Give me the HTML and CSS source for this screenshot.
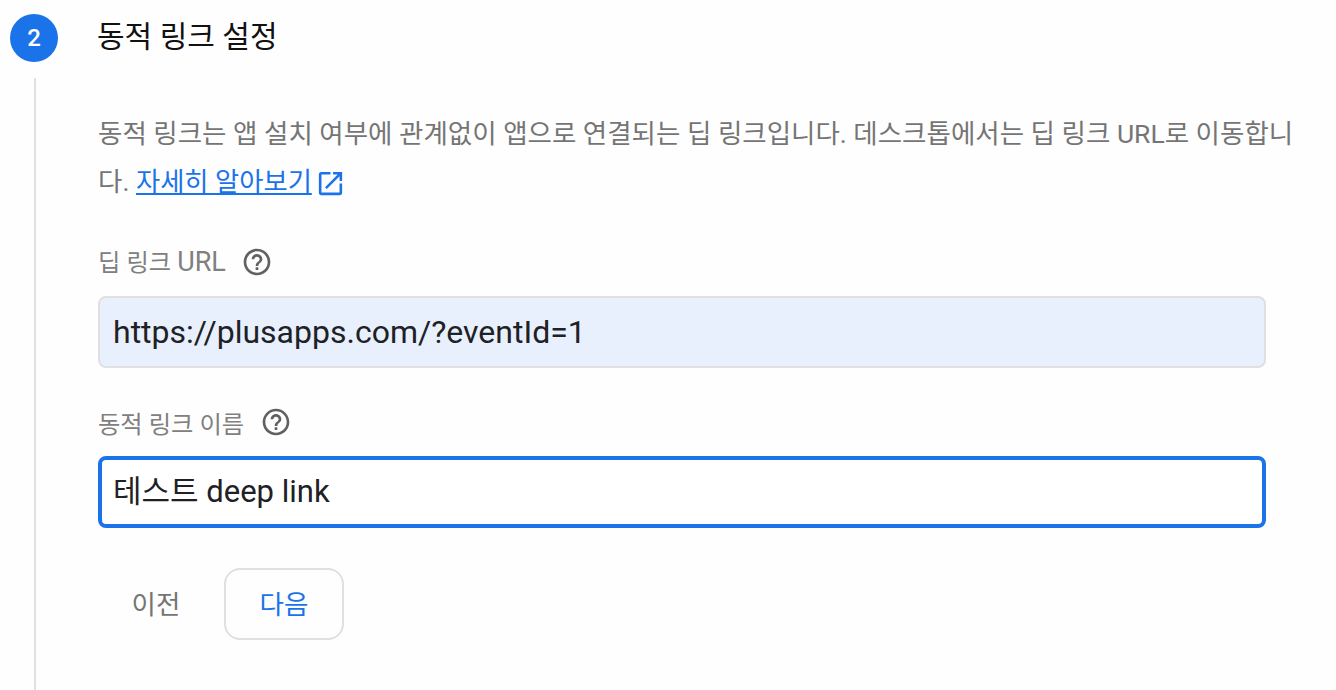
FILE: index.html
```html
<!DOCTYPE html>
<html lang="ko">
<head>
    <meta charset="UTF-8">
    <title>동적 링크 설정</title>
    <link rel="stylesheet" href="styles.css">
</head>
<body>
    <div class="step-header">
        <div class="step-num">2</div>
        <h2 class="step-title">동적 링크 설정</h2>
    </div>
    <div class="step-body">
        <p class="desc">동적 링크는 앱 설치 여부에 관계없이 앱으로 연결되는 딥 링크입니다. 데스크톱에서는 딥 링크 URL로 이동합니다. <a href="#" class="learn">자세히 알아보기</a><svg class="ext" viewBox="0 0 24 24" width="31" height="31"><path d="M19 19H5V5h7V3H5a2 2 0 0 0-2 2v14a2 2 0 0 0 2 2h14a2 2 0 0 0 2-2v-7h-2v7zM14 3v2h3.59l-9.83 9.83 1.41 1.41L19 6.41V10h2V3h-7z"/></svg></p>

        <div class="field-label first">
            <span class="label-text">딥 링크 <span class="latin">URL</span></span>
            <svg class="help" viewBox="0 0 24 24" width="32" height="32"><path d="M11 18h2v-2h-2v2zm1-16C6.48 2 2 6.48 2 12s4.48 10 10 10 10-4.48 10-10S17.52 2 12 2zm0 18c-4.41 0-8-3.59-8-8s3.59-8 8-8 8 3.59 8 8-3.59 8-8 8zm0-14c-2.21 0-4 1.79-4 4h2c0-1.1.9-2 2-2s2 .9 2 2c0 2-3 1.75-3 5h2c0-2.25 3-2.5 3-5 0-2.21-1.79-4-4-4z"/></svg>
        </div>
        <input class="field filled" type="text" value="https://plusapps.com/?eventId=1">

        <div class="field-label second">
            <span>동적 링크 이름</span>
            <svg class="help" viewBox="0 0 24 24" width="32" height="32"><path d="M11 18h2v-2h-2v2zm1-16C6.48 2 2 6.48 2 12s4.48 10 10 10 10-4.48 10-10S17.52 2 12 2zm0 18c-4.41 0-8-3.59-8-8s3.59-8 8-8 8 3.59 8 8-3.59 8-8 8zm0-14c-2.21 0-4 1.79-4 4h2c0-1.1.9-2 2-2s2 .9 2 2c0 2-3 1.75-3 5h2c0-2.25 3-2.5 3-5 0-2.21-1.79-4-4-4z"/></svg>
        </div>
        <input class="field focused" type="text" value="테스트 deep link">

        <div class="actions">
            <button class="btn-text">이전</button>
            <button class="btn-next">다음</button>
        </div>
    </div>
</body>
</html>
```

FILE: styles.css
```css
html, body {
    height: 100%;
    overflow: hidden;
}
body {
    margin: 0;
    background-color: #fefefe;
    color: #202124;
    font-family: Roboto, "Noto Sans CJK KR", sans-serif;
}
.step-header {
    display: flex;
    align-items: center;
    height: 48px;
    padding: 14px 0 0 10px;
}
.step-num {
    width: 48px;
    height: 48px;
    border-radius: 50%;
    background-color: #1a73e8;
    color: #fff;
    font-size: 24px;
    font-weight: 500;
    line-height: 48px;
    text-align: center;
}
.step-title {
    margin: -9px 0 0 39px;
    color: #111;
    font-size: 30px;
    font-weight: 400;
}
.step-body {
    margin: 16px 0 0 34px;
    width: 1232px;
    height: 612px;
    padding: 32px 0 0 62px;
    box-sizing: border-box;
    border-left: 2px solid #e0e0e0;
}
.desc {
    margin: 0;
    width: 1200px;
    color: #757575;
    font-size: 26.5px;
    line-height: 48px;
}
.learn {
    color: #1a73e8;
    font-size: 26.3px;
}
.ext {
    fill: #1a73e8;
    margin-left: 3px;
    vertical-align: -8px;
}
.field-label {
    display: flex;
    align-items: center;
    gap: 16px;
    height: 32px;
    color: #808080;
    font-size: 24.3px;
}
.label-text {
    margin-top: -3px;
}
.latin {
    font-size: 27px;
}
.field-label.first {
    gap: 15px;
    margin-top: 40px;
}
.field-label.second {
    margin-top: 38px;
}
.help {
    fill: #616161;
}
.field {
    display: block;
    box-sizing: border-box;
    width: 1168px;
    height: 72px;
    margin-top: 18px;
    padding: 0 13px;
    border: 2px solid #e0e0e0;
    border-radius: 8px;
    outline: none;
    background: #fff;
    color: #202124;
    font-family: inherit;
    font-size: 32px;
}
.field.filled {
    background-color: #e8f0fe;
}
.field.focused {
    padding: 0 11px 8px;
    border: 4px solid #1a73e8;
    font-size: 31px;
}
.actions {
    display: flex;
    gap: 10px;
    margin-top: 40px;
}
.actions button {
    height: 72px;
    padding: 0 0 4px;
    font-family: inherit;
    font-size: 26.5px;
    background: none;
}
.btn-text {
    width: 116px;
    border: none;
    color: #757575;
}
.btn-next {
    width: 120px;
    border: 2px solid #e0e0e0;
    border-radius: 16px;
    color: #1a73e8;
}
```
